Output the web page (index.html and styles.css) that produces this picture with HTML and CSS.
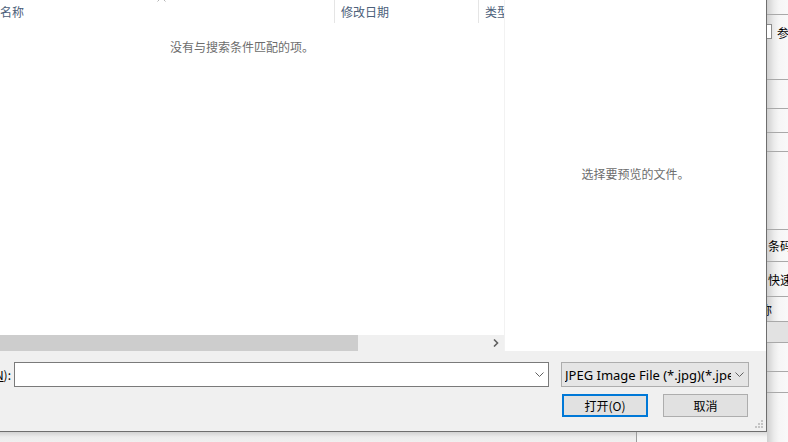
FILE: index.html
```html
<!DOCTYPE html>
<html lang="zh-CN">
<head>
    <meta charset="UTF-8">
    <title>打开</title>
    <link rel="stylesheet" href="styles.css">
</head>
<body>
    <div class="desk">
        <div class="dialog">
            <div class="browser">
                <div class="list">
                    <div class="list-head">
                        <div class="col col-name">名称
                            <svg class="sort" width="9" height="5" viewBox="0 0 9 5"><path d="M0.5 4.5 L4.5 0.5 L8.5 4.5" fill="none" stroke="#b5b5b5" stroke-width="1"/></svg>
                        </div>
                        <div class="col col-date">修改日期</div>
                        <div class="col col-type">类型</div>
                    </div>
                    <div class="list-body">
                        <p class="empty">没有与搜索条件匹配的项。</p>
                    </div>
                    <div class="hscroll">
                        <div class="thumb"></div>
                        <div class="arrow">
                            <svg width="6" height="8" viewBox="0 0 6 8"><path d="M1 0.5 L4.5 4 L1 7.5" fill="none" stroke="#606060" stroke-width="1.6"/></svg>
                        </div>
                    </div>
                </div>
                <div class="preview">
                    <p class="hint">选择要预览的文件。</p>
                </div>
            </div>
            <div class="footer">
                <div class="row fields">
                    <label class="name-label"><span>文件名(<u>N</u>):</span></label>
                    <div class="input">
                        <svg width="9" height="5" viewBox="0 0 9 5"><path d="M0.5 0.5 L4.5 4.5 L8.5 0.5" fill="none" stroke="#606060" stroke-width="1"/></svg>
                    </div>
                    <div class="filter">
                        <span class="filter-text">JPEG Image File (*.jpg)(*.jpeg)</span>
                        <svg width="9" height="5" viewBox="0 0 9 5"><path d="M0.5 0.5 L4.5 4.5 L8.5 0.5" fill="none" stroke="#606060" stroke-width="1"/></svg>
                    </div>
                </div>
                <div class="row buttons">
                    <button class="btn btn-default">打开(<u>O</u>)</button>
                    <button class="btn">取消</button>
                </div>
                <svg class="grip" width="9" height="9" viewBox="0 0 9 9">
                    <rect x="6" y="0" width="2" height="2" fill="#c4c4c4"/>
                    <rect x="3" y="3" width="2" height="2" fill="#c4c4c4"/>
                    <rect x="6" y="3" width="2" height="2" fill="#c4c4c4"/>
                    <rect x="0" y="6" width="2" height="2" fill="#c4c4c4"/>
                    <rect x="3" y="6" width="2" height="2" fill="#c4c4c4"/>
                    <rect x="6" y="6" width="2" height="2" fill="#c4c4c4"/>
                </svg>
            </div>
        </div>

        <div class="side">
            <div class="srow" style="height:14px"></div>
            <div class="srow srow-check" style="height:65px"><span class="check"></span><span>参</span></div>
            <div class="srow" style="height:28px"></div>
            <div class="srow" style="height:23px"></div>
            <div class="srow" style="height:18px"></div>
            <div class="srow" style="height:77px"></div>
            <div class="srow srow-text" style="height:31px"><span>条码</span></div>
            <div class="srow srow-text" style="height:34px"><span>快速</span></div>
            <div class="srow srow-text" style="height:24px"><span class="cut">称</span></div>
            <div class="srow srow-dark" style="height:20px"></div>
            <div class="srow" style="height:28px"></div>
            <div class="srow" style="height:20px"></div>
            <div class="srow srow-last"></div>
        </div>

        <div class="under">
            <div class="under-left"></div>
            <div class="under-right"></div>
        </div>
    </div>
</body>
</html>
```

FILE: styles.css
```css
html, body {
    margin: 0;
    padding: 0;
}
body {
    width: 788px;
    height: 442px;
    overflow: hidden;
    font-family: "Noto Sans", "Noto Sans CJK SC", sans-serif;
    font-size: 12px;
    color: #000;
}
.desk {
    display: grid;
    grid-template-columns: 767px 21px;
    grid-template-rows: 432px 10px;
    width: 788px;
    height: 442px;
}

/* dialog */
.dialog {
    grid-column: 1;
    grid-row: 1;
    display: flex;
    flex-direction: column;
    background: #f0f0f0;
    border-right: 1px solid #6e6e6e;
    border-bottom: 1px solid #6e6e6e;
    overflow: hidden;
}
.browser {
    display: flex;
    height: 351px;
    background: #fff;
}
.list {
    width: 504px;
    flex-shrink: 0;
    display: flex;
    flex-direction: column;
    border-right: 1px solid #f2f2f2;
    overflow: hidden;
}
.list-head {
    display: flex;
    height: 23px;
    font-family: "Noto Sans CJK SC", sans-serif;
    color: #4c607a;
    flex-shrink: 0;
}
.col {
    display: flex;
    align-items: center;
    flex-shrink: 0;
    box-sizing: border-box;
    white-space: nowrap;
    border-right: 1px solid #e5e5e5;
}
.col-name {
    width: 335px;
    position: relative;
}
.col-date {
    width: 144px;
    padding-left: 6px;
}
.col-type {
    width: 120px;
    padding-left: 6px;
    border-right: none;
}
.sort {
    position: absolute;
    left: 157px;
    top: -3px;
}
.list-body {
    flex: 1;
    padding: 16px 0 0 170px;
}
.empty {
    margin: 0;
    line-height: 16px;
    font-family: "Noto Sans CJK SC", sans-serif;
    color: #6d6d6d;
}
.hscroll {
    display: flex;
    height: 16px;
    background: #f0f0f0;
    flex-shrink: 0;
}
.thumb {
    width: 358px;
    background: #cdcdcd;
}
.arrow {
    margin-left: auto;
    width: 17px;
    display: flex;
    align-items: center;
    justify-content: center;
}
.preview {
    flex: 1;
    display: flex;
    align-items: center;
    justify-content: center;
}
.hint {
    margin: 0 0 4px 0;
    font-family: "Noto Sans CJK SC", sans-serif;
    color: #6d6d6d;
}

/* footer */
.footer {
    flex: 1;
    display: flex;
    flex-direction: column;
    padding-top: 11px;
}
.row {
    display: flex;
    align-items: center;
}
.fields {
    height: 25px;
    padding-right: 17px;
}
.name-label {
    width: 14px;
    display: flex;
    justify-content: flex-end;
    overflow: hidden;
    white-space: nowrap;
    font-family: "Noto Sans CJK SC", sans-serif;
}
.name-label span {
    margin-right: 3px;
}
.input {
    box-sizing: border-box;
    width: 535px;
    height: 25px;
    background: #fff;
    border: 1px solid #7a7a7a;
    display: flex;
    align-items: center;
    justify-content: flex-end;
    padding-right: 4px;
}
.filter {
    box-sizing: border-box;
    width: 188px;
    height: 25px;
    margin-left: 12px;
    background: #e5e5e5;
    border: 1px solid #adadad;
    display: flex;
    align-items: center;
    padding: 0 4px 0 3px;
}
.filter-text {
    flex: 1;
    overflow: hidden;
    white-space: nowrap;
    font-size: 13px;
}
.filter svg {
    flex-shrink: 0;
    margin-left: 4px;
}
.buttons {
    justify-content: flex-end;
    gap: 15px;
    margin-top: 7px;
    padding-right: 18px;
}
.btn {
    box-sizing: border-box;
    width: 85px;
    height: 23px;
    padding: 0;
    background: #e1e1e1;
    border: 1px solid #adadad;
    font-family: "Noto Sans CJK SC", sans-serif;
    font-size: 12px;
    color: #000;
}
.btn u {
    text-decoration: none;
}
.btn-default {
    width: 86px;
    border: 2px solid #0078d7;
}
.grip {
    align-self: flex-end;
    margin: 3px 2px 0 0;
}

/* background window on the right */
.side {
    grid-column: 2;
    grid-row: 1 / 3;
    display: flex;
    flex-direction: column;
    overflow: hidden;
    background: linear-gradient(to right, #cfcfcf, #ebebeb 7px, #f6f6f6 12px, #f9f9f9);
    font-family: "Noto Sans CJK SC", sans-serif;
    font-size: 12px;
    white-space: nowrap;
}
.srow {
    flex-shrink: 0;
    border-bottom: 1px solid #a9a9a9;
    display: flex;
}
.srow-check {
    align-items: flex-start;
    padding-top: 9px;
    box-sizing: border-box;
    height: 66px;
}
.check {
    width: 13px;
    height: 13px;
    margin-left: -10px;
    border: 1px solid #8c8c8c;
    background: #fff;
    flex-shrink: 0;
    margin-right: 5px;
}
.srow-text {
    align-items: center;
    padding-left: 1px;
}
.cut {
    margin-left: -8px;
}
.srow-dark {
    background: #e2e2e2;
}
.srow-last {
    flex: 1;
    border-bottom: none;
}

/* strip under the dialog */
.under {
    grid-column: 1;
    grid-row: 2;
    display: flex;
}
.under-left {
    width: 636px;
    border-right: 1px solid #9c9c9c;
    background: linear-gradient(#d2d2d2, #ececec 5px, #f0f0f0);
}
.under-right {
    flex: 1;
    background: linear-gradient(#dadada, #f4f4f4 5px, #f8f8f8);
}
```
